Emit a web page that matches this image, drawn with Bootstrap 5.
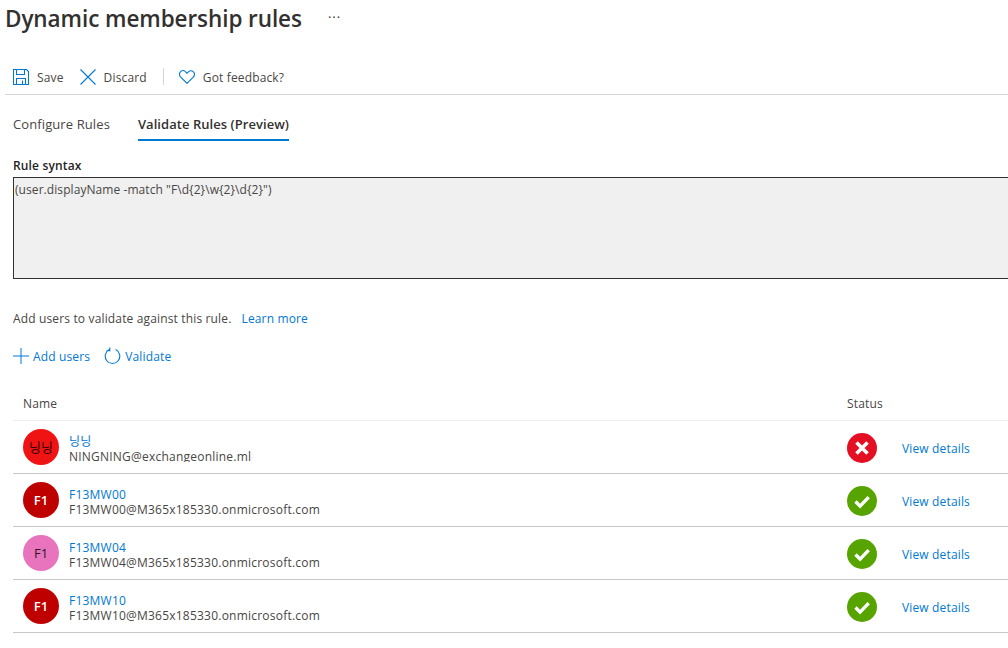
<!DOCTYPE html>
<html lang="en">
<head>
  <meta charset="UTF-8">
  <meta name="viewport" content="width=device-width, initial-scale=1.0">
  <title>Dynamic membership rules</title>
  <link href="https://cdn.jsdelivr.net/npm/bootstrap@5.3.2/dist/css/bootstrap.min.css" rel="stylesheet">
  <script src="https://cdn.jsdelivr.net/npm/bootstrap@5.3.2/dist/js/bootstrap.bundle.min.js"></script>
  <style>
    html, body { height: 648px; overflow: hidden; }
    body {
      background: #fff;
      color: #484644;
      font-family: "Open Sans", "Noto Sans CJK KR", sans-serif;
      font-size: 12px;
      line-height: 15px;
      letter-spacing: .15px;
    }
    a { color: #0078d4; text-decoration: none; }
    .page-title { font-size: 22.5px; line-height: 30px; font-weight: 600; height: 38px; padding: 0 0 0 5px; margin: 0; letter-spacing: -.08px; color: #323130; }
    .title-more { margin-left: 26px; font-size: 13px; line-height: 20px; color: #323130; font-weight: 400; letter-spacing: 1px; position: relative; top: -2px; }
    .cmd-bar { height: 57px; margin-left: 5px; padding: 30px 0 0 8px; border-bottom: 1px solid #d6d6d6; }
    .cmd-item { height: 18px; color: #484644; }
    .cmd-sep { width: 1px; height: 17px; background: #d6d6d6; margin: 0 15px 0 16px; }
    .tab-row { height: 46px; margin-left: 13px; gap: 28px; font-size: 13px; }
    .tab-item { color: #484644; height: 46px; padding-top: 22px; letter-spacing: .1px; }
    .tab-active { font-weight: 600; color: #323130; border-bottom: 2px solid #0078d4; letter-spacing: .05px; }
    .rule-label { font-weight: 600; margin: 17px 0 0 13px; height: 19px; line-height: 15px; color: #252423; }
    .rule-box {
      width: 1020px; height: 102px; margin-left: 13px; padding: 4px 1px;
      background: #f0f0f0; border: 1px solid #323130; color: #484644; letter-spacing: .07px;
    }
    .hint-row { margin: 32px 0 0 13px; height: 15px; gap: 10px; }
    .action-row { margin: 20px 0 0 13px; height: 20px; }
    .action-row a { height: 20px; }
    .user-list { margin: 22px 0 0 13px; }
    .list-head { height: 33px; border-bottom: 1px solid #eee; }
    .head-cell { font-weight: 500; padding-top: 8px; }
    .user-row { height: 53px; border-bottom: 1px solid #c8c8c8; }
    .col-name { width: 834px; padding-left: 10px; flex: none; }
    .col-state { width: 55px; flex: none; padding-top: 2px; }
    .avatar-dot { width: 36px; height: 36px; border-radius: 50%; flex: none; margin-right: 10px; font-size: 13px; letter-spacing: 0; }
    .dot-red { background: #f01313; color: #3a0505; }
    .dot-dark { background: #bf0000; color: #fff; font-weight: 600; }
    .dot-pink { background: #e874bd; color: #2b1722; }
    .user-lines { height: 30px; margin-top: 4px; overflow: hidden; letter-spacing: .22px; }
    .user-lines a, .user-lines span { display: block; }
    .mail-cut { height: 13px; overflow: hidden; }
    .state-icon { display: block; width: 30px; height: 30px; }
    .row-link { margin-top: 3px; }
  </style>
</head>
<body>
  <h1 class="page-title d-flex align-items-center">Dynamic membership rules <span class="title-more">···</span></h1>

  <div class="cmd-bar d-flex align-items-start">
    <a class="cmd-item d-flex align-items-center" href="#">
      <svg width="16" height="16" viewBox="0 0 16 16" fill="none" stroke="#0078d4" stroke-width="1.1" class="me-2">
        <path d="M.5.5h13l2 2v13H.5z"/><path d="M3.5.5v5h8v-5M3.5 15.5v-6h9v6M9.5 11.5v4"/>
      </svg>Save</a>
    <a class="cmd-item d-flex align-items-center" href="#" style="margin-left:16px">
      <svg width="16" height="16" viewBox="0 0 16 16" fill="none" stroke="#0078d4" stroke-width="1.1" class="me-2">
        <path d="M.5.5l15 15M15.5.5l-15 15"/>
      </svg><span>Discard</span></a>
    <span class="cmd-sep"></span>
    <a class="cmd-item d-flex align-items-center" href="#">
      <svg width="16" height="14" viewBox="0 0 16 14" fill="none" stroke="#0078d4" stroke-width="1.1" class="me-2">
        <path d="M8 13.3L1.5 6.8C.1 5.3.2 3 1.6 1.7 3 .4 5.2.4 6.6 1.8L8 3.2l1.4-1.4c1.4-1.4 3.6-1.4 5 0 1.4 1.3 1.5 3.6.1 5z"/>
      </svg><span>Got feedback?</span></a>
  </div>

  <div class="tab-row d-flex">
    <a class="tab-item" href="#">Configure Rules</a>
    <a class="tab-item tab-active" href="#">Validate Rules (Preview)</a>
  </div>

  <div class="rule-label">Rule syntax</div>
  <div class="rule-box">(user.displayName -match "F\d{2}\w{2}\d{2}")</div>

  <div class="hint-row d-flex">
    <span>Add users to validate against this rule.</span>
    <a href="#">Learn more</a>
  </div>

  <div class="action-row d-flex align-items-center">
    <a class="d-flex align-items-center" href="#">
      <svg width="16" height="16" viewBox="0 0 16 16" fill="none" stroke="#0078d4" stroke-width="1" style="margin-right:4px">
        <path d="M8 0v16M0 8h16"/>
      </svg>Add users</a>
    <a class="d-flex align-items-center" href="#" style="margin-left:14px">
      <svg width="17" height="18" viewBox="0 0 17 18" fill="none" stroke="#0078d4" stroke-width="1.1" style="margin-right:4px">
        <path d="M5.4 2.6a7.3 7.3 0 1 0 6.2 0M5.8 .6v3.2H2.6"/>
      </svg>Validate</a>
  </div>

  <div class="user-list">
    <div class="list-head d-flex align-items-start">
      <div class="col-name head-cell">Name</div>
      <div class="head-cell">Status</div>
    </div>

    <div class="user-row d-flex align-items-center">
      <div class="col-name d-flex align-items-center">
        <div class="avatar-dot dot-red d-flex align-items-center justify-content-center">닝닝</div>
        <div class="user-lines">
          <a href="#">닝닝</a>
          <span class="mail-cut">NINGNING@exchangeonline.ml</span>
        </div>
      </div>
      <div class="col-state">
        <svg class="state-icon" viewBox="0 0 30 30"><circle cx="15" cy="15" r="15" fill="#e50f24"/><path d="M9.5 9.5l11 11M20.5 9.5l-11 11" stroke="#fff" stroke-width="3.6" fill="none"/></svg>
      </div>
      <a class="row-link" href="#">View details</a>
    </div>

    <div class="user-row d-flex align-items-center">
      <div class="col-name d-flex align-items-center">
        <div class="avatar-dot dot-dark d-flex align-items-center justify-content-center">F1</div>
        <div class="user-lines">
          <a href="#">F13MW00</a>
          <span>F13MW00@M365x185330.onmicrosoft.com</span>
        </div>
      </div>
      <div class="col-state">
        <svg class="state-icon" viewBox="0 0 30 30"><circle cx="15" cy="15" r="15" fill="#57a300"/><path d="M8.5 15.5l4.6 4.6 8.6-9" stroke="#fff" stroke-width="3.4" fill="none"/></svg>
      </div>
      <a class="row-link" href="#">View details</a>
    </div>

    <div class="user-row d-flex align-items-center">
      <div class="col-name d-flex align-items-center">
        <div class="avatar-dot dot-pink d-flex align-items-center justify-content-center">F1</div>
        <div class="user-lines">
          <a href="#">F13MW04</a>
          <span>F13MW04@M365x185330.onmicrosoft.com</span>
        </div>
      </div>
      <div class="col-state">
        <svg class="state-icon" viewBox="0 0 30 30"><circle cx="15" cy="15" r="15" fill="#57a300"/><path d="M8.5 15.5l4.6 4.6 8.6-9" stroke="#fff" stroke-width="3.4" fill="none"/></svg>
      </div>
      <a class="row-link" href="#">View details</a>
    </div>

    <div class="user-row d-flex align-items-center">
      <div class="col-name d-flex align-items-center">
        <div class="avatar-dot dot-dark d-flex align-items-center justify-content-center">F1</div>
        <div class="user-lines">
          <a href="#">F13MW10</a>
          <span>F13MW10@M365x185330.onmicrosoft.com</span>
        </div>
      </div>
      <div class="col-state">
        <svg class="state-icon" viewBox="0 0 30 30"><circle cx="15" cy="15" r="15" fill="#57a300"/><path d="M8.5 15.5l4.6 4.6 8.6-9" stroke="#fff" stroke-width="3.4" fill="none"/></svg>
      </div>
      <a class="row-link" href="#">View details</a>
    </div>
  </div>
</body>
</html>
